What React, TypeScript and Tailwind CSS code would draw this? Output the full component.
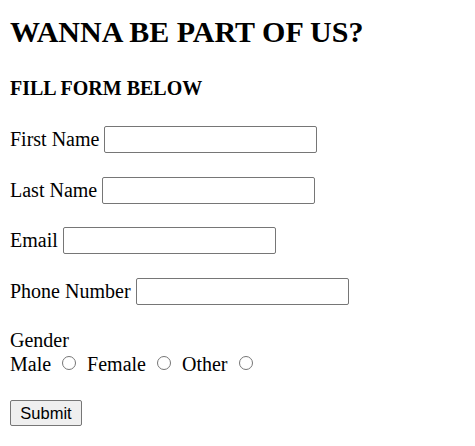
const fields = ["First Name", "Last Name", "Email", "Phone Number"];

const genders = ["Male", "Female", "Other"];

export default function App() {
  return (
    <div className="min-h-[446px] bg-white px-[10px] pt-[15px] font-['Liberation_Serif',serif] text-[20px] text-black">
      <h1 className="text-[30px] font-bold leading-[34px]">WANNA BE PART OF US?</h1>
      <h3 className="mt-[28px] text-[20px] font-bold leading-[23px]">FILL FORM BELOW</h3>
      <form className="mt-[26px] flex flex-col" onSubmit={(e) => e.preventDefault()}>
        {fields.map((f) => (
          <div key={f} className="mb-[23.5px] flex h-[27px] items-center gap-[5px]">
            <label className="leading-[23px]">{f}</label>
            <input
              type="text"
              className="h-[27px] w-[213px] rounded-[2px] border border-[#767676] bg-white px-[2px] outline-none"
            />
          </div>
        ))}
        <div className="-mt-[0.5px] leading-[24px]">Gender</div>
        <div className="flex h-[24px] items-center">
          {genders.map((g, i) => (
            <div key={g} className={i > 0 ? "ml-[11px] flex items-center" : "flex items-center"}>
              <span className="leading-[24px]">{g}</span>
              <input
                type="radio"
                name="gender"
                className="ml-[11px] mt-[-1px] h-[14px] w-[14px] appearance-none rounded-full border border-[#767676] bg-white"
              />
            </div>
          ))}
        </div>
        <div className="mt-[21px]">
          <button
            type="submit"
            className="h-[26px] w-[72px] rounded-[2px] border border-[#767676] bg-[#efefef] font-['Liberation_Sans',sans-serif] text-[16.5px] leading-none text-black"
          >
            Submit
          </button>
        </div>
      </form>
    </div>
  );
}
